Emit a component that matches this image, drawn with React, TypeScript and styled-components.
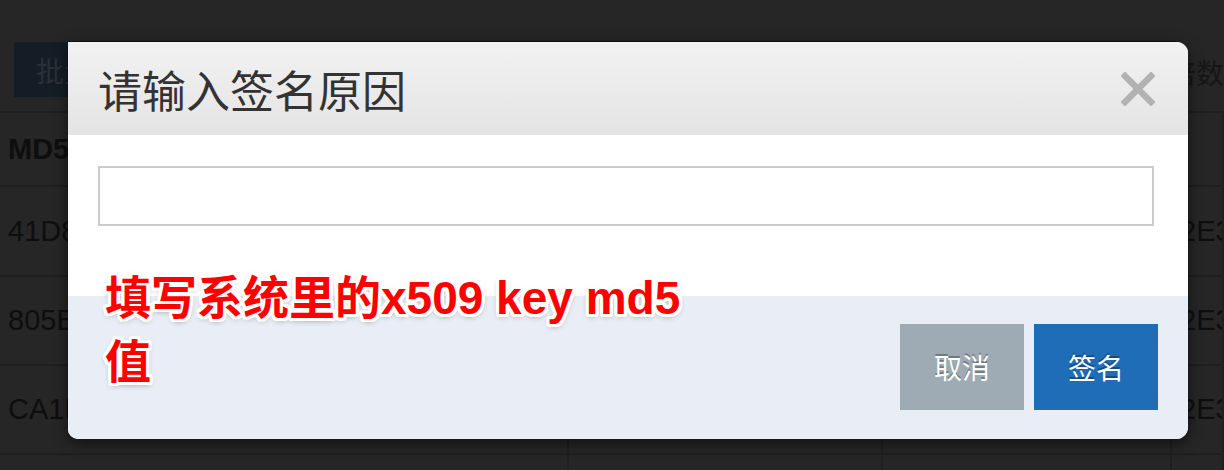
import React from "react";
import styled, { createGlobalStyle } from "styled-components";

const Global = createGlobalStyle`
  html, body { margin: 0; padding: 0; }
  body {
    background: #262626;
    overflow: hidden;
    font-family: "Liberation Sans", "Noto Sans CJK SC", sans-serif;
  }
`;

const Page = styled.div`
  position: relative;
  width: 1224px;
  height: 470px;
  overflow: hidden;
  background: #262626;
`;

const Toolbar = styled.div`
  height: 113px;
  box-sizing: border-box;
  padding: 42px 0 0 14px;
  display: flex;
  justify-content: space-between;
  border-bottom: 2px solid #1f1f1f;
`;

const BatchButton = styled.div`
  width: 170px;
  height: 55px;
  background: #141d26;
  color: #2a3037;
  font-family: "Noto Sans CJK SC", sans-serif;
  font-size: 28px;
  display: flex;
  align-items: center;
  padding-left: 22px;
  box-sizing: border-box;
`;

const ToolbarText = styled.div`
  font-family: "Noto Sans CJK SC", sans-serif;
  font-size: 28px;
  color: #161616;
  margin-top: 10px;
  width: 52px;
  white-space: nowrap;
  overflow: hidden;
  direction: rtl;
`;

const Table = styled.div`
  display: grid;
  grid-template-columns: 569px 314px 289px 1fr;
`;

const Cell = styled.div<{ $h: number; $bold?: boolean }>`
  height: ${(p) => p.$h}px;
  box-sizing: border-box;
  border-bottom: 2px solid #1e1e1e;
  border-right: 2px solid #1f1f1f;
  padding-left: 8px;
  display: flex;
  align-items: center;
  font-size: 29px;
  font-weight: ${(p) => (p.$bold ? 700 : 400)};
  color: #0e0e0e;
  white-space: nowrap;
  overflow: hidden;
  background: ${(p) => (p.$bold ? "#262626" : "transparent")};
`;

const Modal = styled.div`
  position: absolute;
  left: 68px;
  top: 41px;
  width: 1120px;
  border-radius: 0 12px 12px 10px;
  overflow: hidden;
  background: #fff;
  box-shadow: 0 4px 14px rgba(0, 0, 0, 0.55);
  border-top: 1px solid #111;
`;

const Header = styled.div`
  height: 93px;
  box-sizing: border-box;
  padding: 0 33px 0 30px;
  display: flex;
  align-items: center;
  justify-content: space-between;
  background: linear-gradient(#f2f2f2, #e4e4e4);
`;

const Title = styled.h3`
  margin: 0;
  font-family: "Noto Sans CJK SC", sans-serif;
  font-weight: 400;
  font-size: 44px;
  color: #333;
  line-height: 1;
`;

const Close = styled.div`
  width: 34px;
  height: 34px;
  display: flex;
`;

const Body = styled.div`
  height: 161px;
  box-sizing: border-box;
  padding: 31px 34px 0 30px;
`;

const Input = styled.div`
  height: 60px;
  box-sizing: border-box;
  border: 2px solid #cccccc;
  background: #fff;
`;

const Footer = styled.div`
  height: 143px;
  box-sizing: border-box;
  padding: 28px 30px 0 0;
  background: #e9eef6;
  display: flex;
  justify-content: flex-end;
  gap: 10px;
`;

const Button = styled.div<{ $primary?: boolean }>`
  width: 124px;
  height: 86px;
  background: ${(p) => (p.$primary ? "#1f6db7" : "#9eabb4")};
  color: #fff;
  font-family: "Noto Sans CJK SC", sans-serif;
  font-size: 28px;
  display: flex;
  align-items: center;
  justify-content: center;
  text-shadow: 0 -2px 0 rgba(0, 0, 0, 0.28);
`;

const Note = styled.div`
  position: absolute;
  left: 105px;
  top: 266px;
  font-family: "Liberation Sans", "Noto Sans CJK SC", sans-serif;
  font-weight: 700;
  font-size: 46px;
  line-height: 64px;
  color: #ff0000;
  white-space: nowrap;
  text-shadow:
    3px 0 0 #fff, -3px 0 0 #fff, 0 3px 0 #fff, 0 -3px 0 #fff,
    2px 2px 0 #fff, -2px 2px 0 #fff, 2px -2px 0 #fff, -2px -2px 0 #fff,
    3px 2px 0 #fff, -3px 2px 0 #fff, 3px -2px 0 #fff, -3px -2px 0 #fff,
    2px 3px 0 #fff, -2px 3px 0 #fff, 2px -3px 0 #fff, -2px -3px 0 #fff,
    0 2px 6px rgba(0, 0, 0, 0.45);
`;

const rows = [
  ["41D8CD98F00B204E9800998ECF8427E", "", "", "2E38F1A7"],
  ["805E4C1B7A2D93F0E6B1C8A5D4F2E3B", "", "", "2E38F1A7"],
  ["CA1E6F0B92D4A83C7E5B1F9D06A4C2E", "", "", "2E38F1A7"],
];

export default function App() {
  return (
    <Page>
      <Global />
      <Toolbar>
        <BatchButton>批量签名</BatchButton>
        <ToolbarText>倍数</ToolbarText>
      </Toolbar>
      <Table>
        <Cell $h={74} $bold>MD5</Cell>
        <Cell $h={74} $bold>x509</Cell>
        <Cell $h={74} $bold>签名</Cell>
        <Cell $h={74} $bold></Cell>
        {rows.map((r, i) =>
          r.map((c, j) => (
            <Cell key={`${i}-${j}`} $h={i === 0 ? 90 : 89}>
              {c}
            </Cell>
          ))
        )}
        {[0, 1, 2, 3].map((j) => (
          <Cell key={`e-${j}`} $h={60}></Cell>
        ))}
      </Table>
      <Modal>
        <Header>
          <Title>请输入签名原因</Title>
          <Close>
            <svg width="34" height="34" viewBox="0 0 34 34">
              <path
                d="M4 4 L30 30 M30 4 L4 30"
                stroke="#b2b2b2"
                strokeWidth="6.5"
                strokeLinecap="square"
              />
            </svg>
          </Close>
        </Header>
        <Body>
          <Input />
        </Body>
        <Footer>
          <Button>取消</Button>
          <Button $primary>签名</Button>
        </Footer>
      </Modal>
      <Note>
        填写系统里的x509 key md5
        <br />值
      </Note>
    </Page>
  );
}
